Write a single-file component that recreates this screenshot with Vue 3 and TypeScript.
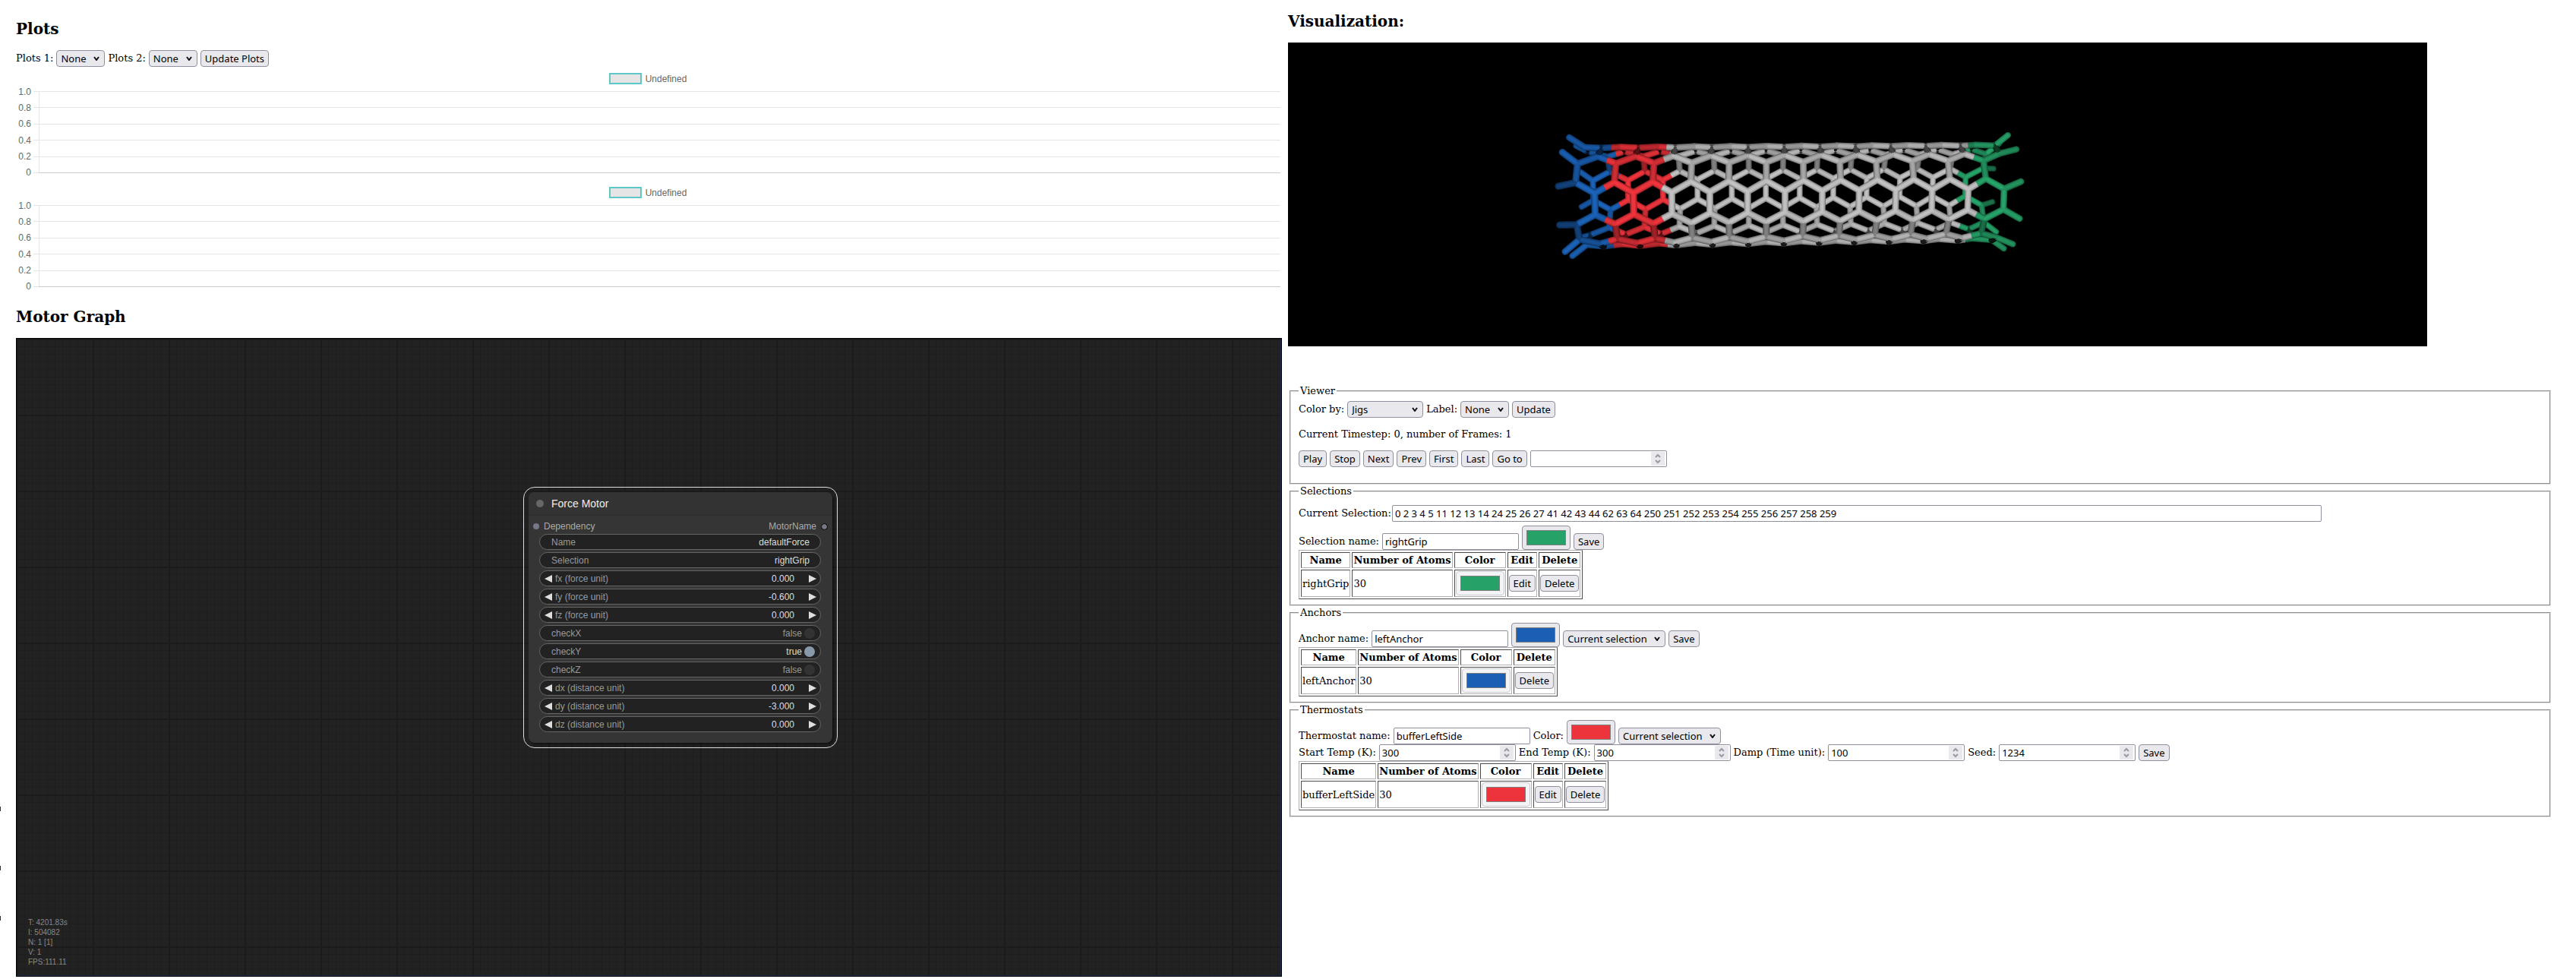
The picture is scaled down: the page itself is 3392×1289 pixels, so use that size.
<script setup lang="ts">
import { reactive, ref } from 'vue'

interface Row {
  name: string
  atoms: number
  color: string
}

type Widget =
  | { kind: 'text'; label: string; value: string }
  | { kind: 'number'; label: string; value: string }
  | { kind: 'toggle'; label: string; value: boolean }

const ticks = ['1.0', '0.8', '0.6', '0.4', '0.2', '0']
const playback = ['Play', 'Stop', 'Next', 'Prev', 'First', 'Last', 'Go to']

const currentSelection = ref(
  '0 2 3 4 5 11 12 13 14 24 25 26 27 41 42 43 44 62 63 64 250 251 252 253 254 255 256 257 258 259',
)
const selection = reactive<Row>({ name: 'rightGrip', atoms: 30, color: '#26a269' })
const anchor = reactive<Row>({ name: 'leftAnchor', atoms: 30, color: '#1a5fb4' })
const thermostat = reactive<Row>({ name: 'bufferLeftSide', atoms: 30, color: '#ed333b' })
const temps = reactive([
  { id: 'start', label: 'Start Temp (K):', value: 300 },
  { id: 'end', label: 'End Temp (K):', value: 300 },
  { id: 'damp', label: 'Damp (Time unit):', value: 100 },
  { id: 'seed', label: 'Seed:', value: 1234 },
])

const stats = ['T: 4201.83s', 'I: 504082', 'N: 1 [1]', 'V: 1', 'FPS:111.11']

const widgets = reactive<Widget[]>([
  { kind: 'text', label: 'Name', value: 'defaultForce' },
  { kind: 'text', label: 'Selection', value: 'rightGrip' },
  { kind: 'number', label: 'fx (force unit)', value: '0.000' },
  { kind: 'number', label: 'fy (force unit)', value: '-0.600' },
  { kind: 'number', label: 'fz (force unit)', value: '0.000' },
  { kind: 'toggle', label: 'checkX', value: false },
  { kind: 'toggle', label: 'checkY', value: true },
  { kind: 'toggle', label: 'checkZ', value: false },
  { kind: 'number', label: 'dx (distance unit)', value: '0.000' },
  { kind: 'number', label: 'dy (distance unit)', value: '-3.000' },
  { kind: 'number', label: 'dz (distance unit)', value: '0.000' },
])

// A (5,5) armchair nanotube, projected with a mild perspective.
type Vec = { x: number; y: number; z: number }
type Rgb = [number, number, number]
interface Atom {
  pos: Vec
  rgb: Rgb
}
interface Stroke {
  x1: number
  y1: number
  x2: number
  y2: number
  w: number
  cap: 'round' | 'butt'
  edge: string
  mid: string
  light: string
  z: number
}

const RADIUS = 191
const PITCH = 138.7
const DISTANCE = 3800
const YAW = 0.1
const BLUE: Rgb = [27, 98, 184]
const RED: Rgb = [240, 52, 60]
const GRAY: Rgb = [194, 194, 194]
const GREEN: Rgb = [38, 164, 106]

function place(u: number, deg: number, radius = RADIUS): Vec {
  const a = (deg * Math.PI) / 180
  const r = radius * Math.cos(a)
  const x = u * Math.cos(YAW) + r * Math.sin(YAW)
  return {
    x,
    y: radius * Math.sin(a) - 0.0112 * (x + 170),
    z: r * Math.cos(YAW) - u * Math.sin(YAW),
  }
}

function axial(k: number, j: number): number {
  return (k % 2 === 0 ? -984.35 : -915) + PITCH * j
}

function tint(k: number, j: number): Rgb {
  const u = axial(k, j)
  if (u < -950) return BLUE
  if (u < -760) return RED
  return u > 440 ? GREEN : GRAY
}

function atom(k: number, j: number, end: 0 | 1): Atom {
  return { pos: place(axial(k, j), k * 36 - 4 + end * 24), rgb: tint(k, j) }
}

function project(p: Vec) {
  const s = DISTANCE / (DISTANCE - p.z)
  return { x: 1248 + p.x * s, y: 318 + p.y * s, s }
}

function shade(c: Rgb, f: number): string {
  return `rgb(${c.map((v) => Math.round(Math.min(255, v * f))).join(',')})`
}

function lerp(a: Vec, b: Vec, t: number): Vec {
  return { x: a.x + (b.x - a.x) * t, y: a.y + (b.y - a.y) * t, z: a.z + (b.z - a.z) * t }
}

function piece(a: Vec, b: Vec, rgb: Rgb, cap: 'round' | 'butt'): Stroke {
  const p = project(a)
  const q = project(b)
  const len = Math.hypot(b.x - a.x, b.y - a.y, b.z - a.z)
  const slope = Math.abs(b.z - a.z) / len
  const f = Math.pow(Math.sqrt(Math.max(0.05, 1 - slope * slope)), 1.3)
  return {
    x1: p.x, y1: p.y, x2: q.x, y2: q.y,
    w: 25 * Math.pow((p.s + q.s) / 2, 1.6),
    cap,
    edge: shade(rgb, 0.6 * f),
    mid: shade(rgb, 0.86 * f),
    light: shade(rgb, f),
    z: (a.z + b.z) / 2,
  }
}

function bond(a: Atom, b: Atom): Stroke[] {
  if (a.rgb === b.rgb) return [piece(a.pos, b.pos, a.rgb, 'round')]
  const m = lerp(a.pos, b.pos, 0.5)
  return [piece(a.pos, m, a.rgb, 'butt'), piece(m, b.pos, b.rgb, 'butt')]
}

function buildTube(): Stroke[][] {
  const front: Stroke[] = []
  const back: Stroke[] = []
  const add = (deg: number, parts: Stroke[]) => {
    const target = Math.cos((deg * Math.PI) / 180) > -0.1 ? front : back
    target.push(...parts)
  }
  for (let k = 0; k < 10; k++) {
    const even = k % 2 === 0
    const first = even ? 0 : -1
    const next = (k + 1) % 10
    for (let j = first; j < first + 12; j++) {
      add(k * 36 + 8, bond(atom(k, j, 0), atom(k, j, 1)))
      const sides = even ? [j - 1, j] : [j, j + 1]
      for (const n of sides) {
        const inside = even ? n >= -1 && n <= 10 : n >= 0 && n <= 11
        if (inside) add(k * 36 + 26, bond(atom(k, j, 1), atom(next, n, 0)))
      }
    }
    // Open valences flare outwards at both ends of the tube.
    const j = even ? 11 : -1
    const u = axial(k, j) + (even ? 56 : -52)
    const up = atom(k, j, 0)
    const down = atom(k, j, 1)
    add(k * 36 - 10, [piece(up.pos, place(u, k * 36 - 10, RADIUS * 1.2), up.rgb, 'round')])
    add(k * 36 + 26, [piece(down.pos, place(u, k * 36 + 26, RADIUS * 1.2), up.rgb, 'round')])
  }
  return [back.sort((a, b) => a.z - b.z), front.sort((a, b) => a.z - b.z)]
}

const layers = buildTube()
const passes = [
  { key: 'edge', scale: 1 },
  { key: 'mid', scale: 0.8 },
  { key: 'light', scale: 0.46 },
] as const
</script>

<template>
  <main class="page">
    <div class="gutter" aria-hidden="true"><i></i><i></i><i></i></div>

    <section class="column left">
      <h2>Plots</h2>
      <div class="row">
        <label for="plot1">Plots 1:</label>
        <span class="pick"><select id="plot1"><option>None</option></select>
          <svg viewBox="0 0 8 6"><path d="M1 1l3 4 3-4" /></svg></span>
        <label for="plot2">Plots 2:</label>
        <span class="pick"><select id="plot2"><option>None</option></select>
          <svg viewBox="0 0 8 6"><path d="M1 1l3 4 3-4" /></svg></span>
        <button type="button">Update Plots</button>
      </div>

      <div v-for="c in 2" :key="c" class="chart">
        <div class="legend"><span class="key"></span>Undefined</div>
        <div class="plot">
          <div v-for="t in ticks" :key="t" class="tick" :class="{ zero: t === '0' }">
            <span>{{ t }}</span><b></b><hr />
          </div>
        </div>
      </div>

      <h2 class="graph-title">Motor Graph</h2>
      <div class="graph">
        <article class="node">
          <header><i></i>Force Motor</header>
          <div class="slots">
            <span class="slot"><i></i>Dependency</span>
            <span class="slot out">MotorName<i></i></span>
          </div>
          <div v-for="w in widgets" :key="w.label" class="widget" :class="w.kind">
            <button v-if="w.kind === 'number'" type="button" aria-label="Decrease">
              <svg viewBox="0 0 10 10"><path d="M10 0v10L0 5z" /></svg>
            </button>
            <label :for="w.label">{{ w.label }}</label>
            <template v-if="w.kind === 'toggle'">
              <output :class="{ on: w.value }">{{ w.value }}</output>
              <input :id="w.label" v-model="w.value" type="checkbox" />
            </template>
            <input v-else :id="w.label" v-model="w.value" type="text" />
            <button v-if="w.kind === 'number'" type="button" aria-label="Increase">
              <svg viewBox="0 0 10 10"><path d="M0 0v10l10-5z" /></svg>
            </button>
          </div>
        </article>
        <div class="stats">
          <div v-for="s in stats" :key="s">{{ s }}</div>
        </div>
      </div>
    </section>

    <section class="column right">
      <h2>Visualization:</h2>
      <div class="scene">
        <svg viewBox="-1002 -282 4500 1200" role="img" aria-label="Nanotube">
          <template v-for="(layer, i) in layers" :key="i">
            <g v-for="p in passes" :key="p.key">
              <line
                v-for="(s, n) in layer"
                :key="n"
                :x1="s.x1"
                :y1="s.y1"
                :x2="s.x2"
                :y2="s.y2"
                :stroke="s[p.key]"
                :stroke-width="s.w * p.scale"
                :stroke-linecap="s.cap"
              />
            </g>
          </template>
        </svg>
      </div>

      <fieldset class="viewer">
        <legend>Viewer</legend>
        <div class="row">
          <label for="colorby">Color by:</label>
          <span class="pick wide"><select id="colorby"><option>Jigs</option></select>
            <svg viewBox="0 0 8 6"><path d="M1 1l3 4 3-4" /></svg></span>
          <label for="label">Label:</label>
          <span class="pick"><select id="label"><option>None</option></select>
            <svg viewBox="0 0 8 6"><path d="M1 1l3 4 3-4" /></svg></span>
          <button type="button">Update</button>
        </div>
        <p>Current Timestep: 0, number of Frames: 1</p>
        <div class="row">
          <button v-for="b in playback" :key="b" type="button">{{ b }}</button>
          <span class="spin"><input type="number" aria-label="Frame" />
            <svg viewBox="0 0 18 18"><path d="M6 7l3-3 3 3M6 11l3 3 3-3" /></svg></span>
        </div>
      </fieldset>

      <fieldset>
        <legend>Selections</legend>
        <div class="row current">
          <label for="current">Current Selection:</label>
          <input id="current" v-model="currentSelection" type="text" />
        </div>
        <div class="row">
          <label for="selname">Selection name:</label>
          <input id="selname" v-model="selection.name" type="text" />
          <input v-model="selection.color" type="color" aria-label="Selection color" />
          <button type="button">Save</button>
        </div>
        <table>
          <thead>
            <tr><th>Name</th><th>Number of Atoms</th><th>Color</th><th>Edit</th><th>Delete</th></tr>
          </thead>
          <tbody>
            <tr>
              <td>{{ selection.name }}</td>
              <td>{{ selection.atoms }}</td>
              <td><input type="color" :value="selection.color" disabled aria-label="Color" /></td>
              <td><button type="button">Edit</button></td>
              <td><button type="button">Delete</button></td>
            </tr>
          </tbody>
        </table>
      </fieldset>

      <fieldset>
        <legend>Anchors</legend>
        <div class="row">
          <label for="anchorname">Anchor name:</label>
          <input id="anchorname" v-model="anchor.name" type="text" />
          <input v-model="anchor.color" type="color" aria-label="Anchor color" />
          <span class="pick"><select aria-label="Anchor atoms"><option>Current selection</option></select>
            <svg viewBox="0 0 8 6"><path d="M1 1l3 4 3-4" /></svg></span>
          <button type="button">Save</button>
        </div>
        <table>
          <thead>
            <tr><th>Name</th><th>Number of Atoms</th><th>Color</th><th>Delete</th></tr>
          </thead>
          <tbody>
            <tr>
              <td>{{ anchor.name }}</td>
              <td>{{ anchor.atoms }}</td>
              <td><input type="color" :value="anchor.color" disabled aria-label="Color" /></td>
              <td><button type="button">Delete</button></td>
            </tr>
          </tbody>
        </table>
      </fieldset>

      <fieldset>
        <legend>Thermostats</legend>
        <div class="row">
          <label for="thermoname">Thermostat name:</label>
          <input id="thermoname" v-model="thermostat.name" type="text" />
          <label for="thermocolor">Color:</label>
          <input id="thermocolor" v-model="thermostat.color" type="color" />
          <span class="pick"><select aria-label="Thermostat atoms"><option>Current selection</option></select>
            <svg viewBox="0 0 8 6"><path d="M1 1l3 4 3-4" /></svg></span>
        </div>
        <div class="row">
          <template v-for="t in temps" :key="t.id">
            <label :for="t.id">{{ t.label }}</label>
            <span class="spin"><input :id="t.id" v-model="t.value" type="number" />
              <svg viewBox="0 0 18 18"><path d="M6 7l3-3 3 3M6 11l3 3 3-3" /></svg></span>
          </template>
          <button type="button">Save</button>
        </div>
        <table>
          <thead>
            <tr><th>Name</th><th>Number of Atoms</th><th>Color</th><th>Edit</th><th>Delete</th></tr>
          </thead>
          <tbody>
            <tr>
              <td>{{ thermostat.name }}</td>
              <td>{{ thermostat.atoms }}</td>
              <td><input type="color" :value="thermostat.color" disabled aria-label="Color" /></td>
              <td><button type="button">Edit</button></td>
              <td><button type="button">Delete</button></td>
            </tr>
          </tbody>
        </table>
      </fieldset>
    </section>
  </main>
</template>

<style>
body {
  background: #fff;
}
</style>

<style scoped>
.page {
  position: relative;
  display: grid;
  grid-template-columns: minmax(0, 1fr) minmax(0, 1fr);
  gap: 8px;
  padding: 0 29px 3px 21px;
  color: #000;
  font: 13px/17px "DejaVu Serif", serif;
}

.gutter {
  position: absolute;
  left: 0;
  top: 1062px;
  display: grid;
  gap: 72px;
}

.gutter i {
  width: 1px;
  height: 6px;
  background: #333;
}

.gutter i:last-child {
  margin-top: -12px;
}

.left {
  padding-top: 10px;
}

h2 {
  margin: 0;
  padding: 17px 0 16px;
  font-size: 20px;
  line-height: 23px;
}

.graph-title {
  padding-top: 18px;
}

.row {
  display: flex;
  align-items: flex-end;
  gap: 4px;
}

.row label {
  line-height: 22px;
  white-space: nowrap;
}

button,
select,
input {
  box-sizing: border-box;
  height: 22px;
  margin: 0;
  border: 1px solid #8f8f9d;
  color: #000;
  font: 13px/18px "Noto Sans", sans-serif;
}

button {
  flex: none;
  padding: 0 5px;
  border-radius: 4px;
  background: #e9e9ed;
}

select {
  padding: 0 23px 0 5px;
  border-radius: 4px;
  background: #e9e9ed;
  appearance: none;
}

.pick,
.spin {
  position: relative;
  display: inline-flex;
}

.wide select {
  width: 100px;
}

.pick svg {
  position: absolute;
  top: 8px;
  right: 7px;
  width: 8px;
  height: 6px;
  fill: none;
  stroke: #111;
  stroke-width: 2;
  pointer-events: none;
}

input[type="text"],
input[type="number"] {
  width: 180px;
  padding: 0 3px;
  border-radius: 2px;
  background: #fff;
  appearance: textfield;
}

input::-webkit-inner-spin-button {
  appearance: none;
  margin: 0;
}

.spin svg {
  position: absolute;
  top: 2px;
  right: 3px;
  width: 18px;
  height: 18px;
  background: #e9e9ed;
  fill: none;
  stroke: #9a9aa6;
  stroke-width: 2;
}

input[type="color"] {
  display: block;
  width: 64px;
  height: 32px;
  padding: 5px;
  border-radius: 4px;
  background: #e9e9ed;
}

input[type="color"]:disabled {
  border-color: #c7c7ce;
  background: #f4f4f6;
}

input[type="color"]::-webkit-color-swatch-wrapper {
  padding: 0;
}

input[type="color"]::-webkit-color-swatch {
  border: 1px solid #808080;
  border-radius: 0;
}

/* Charts */
.chart {
  height: 150px;
  font: 12px/14px "Liberation Sans", Arial, sans-serif;
  color: #666;
}

.legend {
  display: flex;
  align-items: center;
  justify-content: center;
  gap: 5px;
  padding: 8px 3px 0 0;
  height: 15px;
}

.key {
  box-sizing: border-box;
  width: 43px;
  height: 15px;
  border: 2px solid #5fc7c7;
  background: #e5e5e5;
}

.plot {
  display: flex;
  flex-direction: column;
  justify-content: space-between;
  height: 108px;
  margin: 9px 2px 0 0;
  background: linear-gradient(#e5e5e5, #e5e5e5) 30px 0 / 1px 100% no-repeat;
}

.tick {
  display: flex;
  align-items: center;
  height: 1px;
}

.tick span {
  width: 20px;
  margin-right: 3px;
  text-align: right;
}

.tick b {
  width: 7px;
  height: 1px;
  background: #e5e5e5;
}

.tick hr {
  flex: 1;
  height: 1px;
  margin: 0;
  border: 0;
  background: #e5e5e5;
}

.tick.zero hr {
  background: #cbcbcb;
}

/* Motor graph */
.graph {
  position: relative;
  box-sizing: border-box;
  height: 841px;
  border: 1px solid #000;
  background:
    linear-gradient(90deg, #1b1b1b 2px, transparent 2px) 0 0 / 100px 100px,
    linear-gradient(#1b1b1b 2px, transparent 2px) 0 0 / 100px 100px,
    linear-gradient(90deg, #1e1e1e 1px, transparent 1px) 0 0 / 10px 10px,
    linear-gradient(#1e1e1e 1px, transparent 1px) 0 0 / 10px 10px,
    #222;
  box-shadow: inset -1px -1px #1c2a50;
  font: 12px/20px "Liberation Sans", Arial, sans-serif;
}

.node {
  position: absolute;
  left: 674px;
  top: 202px;
  width: 400px;
  height: 330px;
  border-radius: 8px;
  background: #353535;
  color: #aaa;
  box-shadow: 2px 2px 3px rgba(0, 0, 0, 0.5);
  outline: 1px solid #ddd;
  outline-offset: 6px;
}

.node header {
  display: flex;
  align-items: center;
  box-sizing: border-box;
  height: 31px;
  padding-left: 10px;
  border-bottom: 1px solid #2c2c2c;
  border-radius: 8px 8px 0 0;
  background: #333;
  color: #eee;
  font-size: 14px;
}

.node header i {
  width: 10px;
  height: 10px;
  margin-right: 10px;
  border-radius: 50%;
  background: #666;
}

.slots {
  display: flex;
  justify-content: space-between;
  padding: 4px 6px 0;
}

.slot {
  display: flex;
  align-items: center;
  gap: 6px;
}

.slot i {
  box-sizing: border-box;
  width: 8px;
  height: 8px;
  border-radius: 50%;
  background: #778;
}

.slot.out i {
  width: 9px;
  height: 9px;
  border: 1px solid #000;
}

.widget {
  display: flex;
  align-items: center;
  box-sizing: border-box;
  height: 21px;
  margin: 0 15px 3px 14px;
  padding: 0 14px 0 15px;
  border: 1px solid #666;
  border-radius: 11px;
  background: #222;
  color: #999;
}

.widget input[type="text"] {
  flex: 1;
  width: 0;
  height: 18px;
  padding: 0;
  border: 0;
  background: none;
  color: #ddd;
  font: inherit;
  text-align: right;
}

.widget.number {
  padding: 0 5px 0 6px;
}

.widget button {
  width: 10px;
  height: 10px;
  padding: 0;
  border: 0;
  background: none;
}

.widget button svg {
  display: block;
  width: 10px;
  height: 10px;
  fill: #ddd;
}

.widget.number label {
  margin-left: 4px;
}

.widget.number input {
  margin-right: 19px;
}

.widget.toggle {
  padding-right: 7px;
}

.widget output {
  margin-left: auto;
}

.widget output.on {
  color: #ddd;
}

.widget input[type="checkbox"] {
  width: 14px;
  height: 14px;
  margin-left: 3px;
  border: 0;
  border-radius: 50%;
  background: #333;
  appearance: none;
}

.widget input[type="checkbox"]:checked {
  background: #89a;
}

.stats {
  position: absolute;
  left: 15px;
  bottom: 12px;
  color: #888;
  font-size: 10px;
  line-height: 13px;
}

/* Scene and forms */
.scene {
  width: 90%;
  height: 400px;
  margin-bottom: 50px;
  background: #000;
}

.scene svg {
  display: block;
  width: 100%;
  height: 100%;
}

fieldset {
  min-width: 0;
  margin: 0 4px 0 2px;
  padding: 5px 10px 7px;
  border: 2px groove #e0e0e3;
}

legend {
  padding: 0 2px;
}

p {
  margin: 13px 0;
}

.viewer {
  padding-bottom: 21px;
}

.current {
  gap: 1px;
  margin: 5px 0;
}

.current input[type="text"] {
  width: calc(75% - 4px);
}

table {
  border: 1px solid;
  border-color: #b0b0b0 #4c4c4c #4c4c4c #b0b0b0;
  border-spacing: 2px;
}

th,
td {
  padding: 1px;
  border: 1px solid;
  border-color: #4c4c4c #b0b0b0 #b0b0b0 #4c4c4c;
}

td button {
  display: block;
}
</style>
